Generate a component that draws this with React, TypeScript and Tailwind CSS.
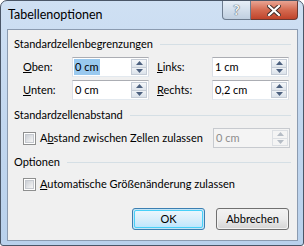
import React from "react";

const font = { fontFamily: 'Lato, "Liberation Sans", sans-serif' };

function Arrow({ up, disabled }: { up: boolean; disabled?: boolean }) {
  return (
    <svg width="7" height="4" viewBox="0 0 7 4" className="block">
      {up ? (
        <path d="M0 4 L3.5 0 L7 4 Z" fill={disabled ? "#b5bcc5" : "#4c607f"} />
      ) : (
        <path d="M0 0 L3.5 4 L7 0 Z" fill={disabled ? "#b5bcc5" : "#4c607f"} />
      )}
    </svg>
  );
}

function Spin({ value, selected, disabled, w = "w-[77px]" }: { value: string; selected?: boolean; disabled?: boolean; w?: string }) {
  return (
    <div
      className={`${w} h-[20px] flex items-stretch border ${
        disabled ? "border-[#c7cacf] bg-[#f4f4f4]" : "border-t-[#abadb3] border-x-[#dbdfe6] border-b-[#e3e9ef] bg-white"
      }`}
    >
      <div className={`flex-1 flex items-center pl-[1px] text-[11px] leading-[16px] whitespace-nowrap ${disabled ? "text-[#8d8d8d]" : "text-black"}`}>
        <span className={`px-[1px] ${selected ? "bg-[#99c9ef]" : ""}`}>{value}</span>
      </div>
      <div className="w-[16px] flex flex-col my-[1px] mr-[1px]">
        <div
          className={`flex-1 flex items-center justify-center border ${
            disabled ? "border-[#dcdfe3] bg-[#f4f4f4]" : "border-[#c5ccd6] bg-gradient-to-b from-[#f5f7fa] to-[#dfe5ec]"
          }`}
        >
          <Arrow up disabled={disabled} />
        </div>
        <div
          className={`flex-1 flex items-center justify-center border border-t-0 ${
            disabled ? "border-[#dcdfe3] bg-[#f4f4f4]" : "border-[#c5ccd6] bg-gradient-to-b from-[#f0f3f7] to-[#dbe2ea]"
          }`}
        >
          <Arrow up={false} disabled={disabled} />
        </div>
      </div>
    </div>
  );
}

function Check() {
  return (
    <div className="w-[13px] h-[13px] shrink-0 border border-[#8e8f8f] bg-white p-[1px]">
      <div className="w-full h-full bg-gradient-to-br from-[#cbcfd5] to-[#f6f6f6] border border-[#c5c9cf]" />
    </div>
  );
}

function Header({ text }: { text: string }) {
  return (
    <div className="flex items-center h-[16px] pl-[6px] pr-[6px]">
      <span className="text-[11px] leading-[16px] text-black whitespace-nowrap">{text}</span>
      <div className="flex-1 h-px bg-[#d5dfe5] ml-[7px]" />
    </div>
  );
}

export default function App() {
  return (
    <div className="w-[304px] h-[246px] bg-white" style={font}>
      <div className="w-[304px] h-[246px] flex flex-col rounded-t-[7px] rounded-b-[3px] border border-[#4a5667] bg-gradient-to-b from-[#cfe0f3] via-[#c2d7ef] to-[#b9d1ec] overflow-hidden">
        {/* title bar */}
        <div className="h-[28px] flex items-start">
          <div className="pl-[7px] pt-[6px] text-[12.5px] leading-[16px] text-black whitespace-nowrap">Tabellenoptionen</div>
          <div className="flex-1" />
          <div className="flex mr-[5px] h-[19px]">
            <div className="w-[29px] h-[19px] flex items-center justify-center border border-t-0 border-[#6d7c8f] rounded-bl-[4px] bg-gradient-to-b from-[#e6eef7] via-[#d3dfec] to-[#c0cfe0]">
              <span className="text-[14px] font-bold leading-none text-[#f4f6f9] [text-shadow:0_0_1px_#3f4a58,0_0_1px_#3f4a58]">?</span>
            </div>
            <div className="w-[47px] h-[19px] flex items-center justify-center border border-l-0 border-t-0 border-[#6b3a33] rounded-br-[4px] bg-gradient-to-b from-[#e8a493] via-[#d46a50] to-[#c0432a]">
              <svg width="14" height="11" viewBox="0 0 14 11">
                <path d="M2 1 L12 10 M12 1 L2 10" stroke="#3b2a28" strokeWidth="4" strokeLinecap="square" />
                <path d="M2 1 L12 10 M12 1 L2 10" stroke="#ffffff" strokeWidth="2.2" strokeLinecap="square" />
              </svg>
            </div>
          </div>
        </div>
        {/* client */}
        <div className="ml-[6px] mr-[5px] h-[212px] border border-[#8b9bb0] bg-[#f0f0f0] flex flex-col">
          <div className="mt-[6px]">
            <Header text="Standardzellenbegrenzungen" />
          </div>
          <div className="mt-[5px] flex items-center h-[20px] pl-[15px] text-[11px] leading-[16px] whitespace-nowrap">
            <span className="w-[49px]">
              <span className="underline">O</span>ben:
            </span>
            <Spin value="0 cm" selected />
            <span className="w-[55px] ml-[8px]">
              <span className="underline">L</span>inks:
            </span>
            <Spin value="1 cm" />
          </div>
          <div className="mt-[3px] flex items-center h-[20px] pl-[15px] text-[11px] leading-[16px] whitespace-nowrap">
            <span className="w-[49px]">
              <span className="underline">U</span>nten:
            </span>
            <Spin value="0 cm" />
            <span className="w-[55px] ml-[8px]">
              <span className="underline">R</span>echts:
            </span>
            <Spin value="0,2 cm" />
          </div>
          <div className="mt-[7px]">
            <Header text="Standardzellenabstand" />
          </div>
          <div className="mt-[5px] flex items-center h-[20px] pl-[15px] text-[11px] leading-[16px] whitespace-nowrap">
            <Check />
            <span className="ml-[4px] flex-1">
              A<span className="underline">b</span>stand zwischen Zellen zulassen
            </span>
            <div className="mr-[7px]">
              <Spin value="0 cm" disabled />
            </div>
          </div>
          <div className="mt-[6px]">
            <Header text="Optionen" />
          </div>
          <div className="mt-[6px] flex items-center h-[16px] pl-[15px] text-[11px] leading-[16px] whitespace-nowrap">
            <Check />
            <span className="ml-[4px]">
              <span className="underline">A</span>utomatische Größenänderung zulassen
            </span>
          </div>
          <div className="mt-[16px] flex justify-end gap-[11px] pr-[8px]">
            <div className="w-[73px] h-[22px] rounded-[3px] border border-[#3c7fb1] p-[1px] bg-[#c4e5f6]">
              <div className="w-full h-full rounded-[2px] border border-[#48d0f8] bg-gradient-to-b from-[#eaf6fd] via-[#d9eefa] to-[#bee6fd] flex items-center justify-center text-[11px] leading-[16px]">
                OK
              </div>
            </div>
            <div className="w-[73px] h-[22px] rounded-[3px] border border-[#707070] p-[1px] bg-[#f2f2f2]">
              <div className="w-full h-full rounded-[2px] bg-gradient-to-b from-[#f2f2f2] via-[#ebebeb] to-[#d6d6d6] flex items-center justify-center text-[11px] leading-[16px]">
                Abbrechen
              </div>
            </div>
          </div>
        </div>
      </div>
    </div>
  );
}
